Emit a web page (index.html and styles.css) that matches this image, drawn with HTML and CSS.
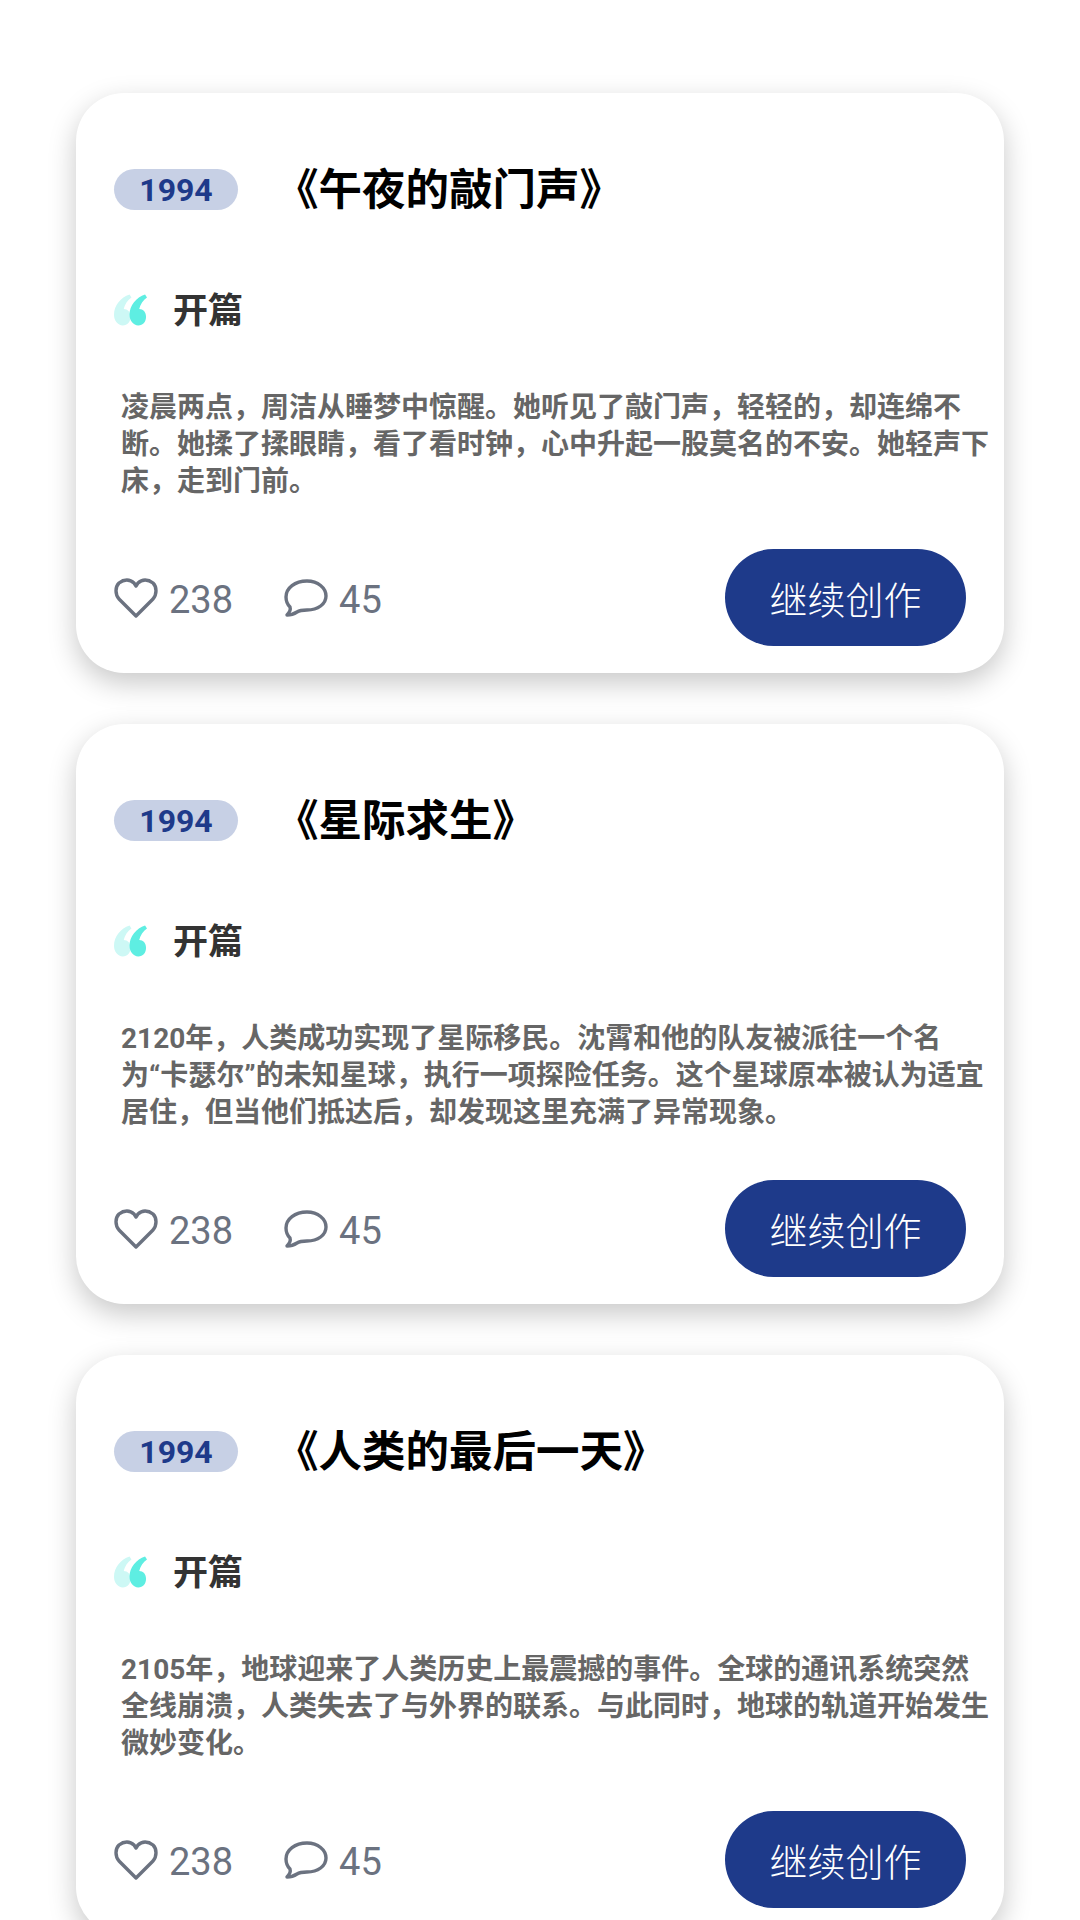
FILE: index.html
```html
<!DOCTYPE html>
<html lang="en">
<head>
  <meta charset="UTF-8">
  <meta name="viewport" content="width=device-width, initial-scale=1.0">
  <title>故事列表</title>
  <link rel="stylesheet" href="styles.css">
</head>
<body>
  <svg class="icon-defs" width="0" height="0" aria-hidden="true">
    <symbol id="icon-quote" viewBox="0 0 34 32">
      <path fill="#cdf8f5" d="M16 0 C7 3 0 11 0 21 C0 27 4 32 9 32 C14 32 17 28 17 23 C17 18 14 15 10 15 C11 10 14 6 18 3 Z"/>
      <path fill="#5eeee2" d="M32 0 C23 3 16 11 16 21 C16 27 20 32 25 32 C30 32 33 28 33 23 C33 18 30 15 26 15 C27 10 30 6 34 3 Z"/>
    </symbol>
    <symbol id="icon-heart" viewBox="0 0 44 40">
      <path fill="none" stroke="currentColor" stroke-width="3.4" stroke-linejoin="round" d="M22 38 L5 21 C1 16 1 9 5 5 C10 1 16 1 20 5 L22 8 L24 5 C28 1 34 1 39 5 C43 9 43 16 39 21 Z"/>
    </symbol>
    <symbol id="icon-comment" viewBox="0 0 44 38">
      <path fill="none" stroke="currentColor" stroke-width="3.4" stroke-linejoin="round" d="M3 36 C5 34 7 31 6 28 C3 25 2 22 2 18 C2 9 11 2 23 2 C34 2 42 9 42 17 C42 25 34 31 23 31 C19 31 16 31 13 33 C10 35 7 36 3 36 Z"/>
    </symbol>
  </svg>

  <div class="story-list">
    <div class="card">
      <div class="card-header">
        <span class="year">1994</span>
        <h2 class="title">《午夜的敲门声》</h2>
      </div>
      <div class="section-head">
        <svg class="quote"><use href="#icon-quote"/></svg>
        <span>开篇</span>
      </div>
      <p class="excerpt">凌晨两点，周洁从睡梦中惊醒。她听见了敲门声，轻轻的，却连绵不断。她揉了揉眼睛，看了看时钟，心中升起一股莫名的不安。她轻声下床，走到门前。</p>
      <div class="card-footer">
        <div class="stats">
          <span class="stat"><svg class="icon-like"><use href="#icon-heart"/></svg><span class="count">238</span></span>
          <span class="stat"><svg class="icon-comment"><use href="#icon-comment"/></svg><span class="count">45</span></span>
        </div>
        <button class="btn">继续创作</button>
      </div>
    </div>

    <div class="card">
      <div class="card-header">
        <span class="year">1994</span>
        <h2 class="title">《星际求生》</h2>
      </div>
      <div class="section-head">
        <svg class="quote"><use href="#icon-quote"/></svg>
        <span>开篇</span>
      </div>
      <p class="excerpt">2120年，人类成功实现了星际移民。沈霄和他的队友被派往一个名为“卡瑟尔”的未知星球，执行一项探险任务。这个星球原本被认为适宜居住，但当他们抵达后，却发现这里充满了异常现象。</p>
      <div class="card-footer">
        <div class="stats">
          <span class="stat"><svg class="icon-like"><use href="#icon-heart"/></svg><span class="count">238</span></span>
          <span class="stat"><svg class="icon-comment"><use href="#icon-comment"/></svg><span class="count">45</span></span>
        </div>
        <button class="btn">继续创作</button>
      </div>
    </div>

    <div class="card">
      <div class="card-header">
        <span class="year">1994</span>
        <h2 class="title">《人类的最后一天》</h2>
      </div>
      <div class="section-head">
        <svg class="quote"><use href="#icon-quote"/></svg>
        <span>开篇</span>
      </div>
      <p class="excerpt">2105年，地球迎来了人类历史上最震撼的事件。全球的通讯系统突然全线崩溃，人类失去了与外界的联系。与此同时，地球的轨道开始发生微妙变化。</p>
      <div class="card-footer">
        <div class="stats">
          <span class="stat"><svg class="icon-like"><use href="#icon-heart"/></svg><span class="count">238</span></span>
          <span class="stat"><svg class="icon-comment"><use href="#icon-comment"/></svg><span class="count">45</span></span>
        </div>
        <button class="btn">继续创作</button>
      </div>
    </div>
  </div>
</body>
</html>
```

FILE: styles.css
```css
:root {
  --primary: #1e3a8a;
  --badge-bg: #c7d0e5;
  --muted: #6b7280;
}

* {
  margin: 0;
  padding: 0;
  box-sizing: border-box;
  font-family: Roboto, "Noto Sans CJK SC", sans-serif;
}

html, body {
  height: 1920px;
  overflow: hidden;
  background-color: white;
}

.icon-defs {
  display: block;
}

.story-list {
  display: flex;
  flex-direction: column;
  gap: 51px;
  padding: 93px 76px 0;
}

.card {
  height: 580px;
  flex-shrink: 0;
  padding: 66px 38px 0;
  background-color: white;
  border-radius: 48px;
  box-shadow: 0 10px 28px rgba(0, 0, 0, 0.22);
}

.card-header {
  display: flex;
  align-items: center;
  gap: 37px;
  height: 60px;
}

.year {
  width: 124px;
  height: 41px;
  border-radius: 21px;
  background-color: var(--badge-bg);
  color: var(--primary);
  font-size: 32px;
  font-weight: 700;
  line-height: 43px;
  text-align: center;
}

.title {
  padding-top: 3px;
  font-size: 43.5px;
  font-weight: 700;
  line-height: 60px;
  color: black;
}

.section-head {
  display: flex;
  align-items: center;
  gap: 26px;
  margin-top: 71px;
  font-size: 35px;
  font-weight: 700;
  line-height: 44px;
  color: #333;
}

.quote {
  width: 33px;
  height: 34px;
  margin-bottom: 4px;
}

.excerpt {
  width: 880px;
  margin-top: 55px;
  padding-left: 7px;
  font-size: 28px;
  font-weight: 700;
  line-height: 37px;
  color: #666;
}

.card-footer {
  display: flex;
  align-items: center;
  justify-content: space-between;
  margin-top: 49px;
}

.stats {
  display: flex;
  align-items: center;
  gap: 51px;
}

.stat {
  display: flex;
  align-items: center;
  gap: 11px;
  font-size: 38px;
  color: var(--muted);
}

.count {
  margin-top: 4px;
}

.icon-like {
  width: 44px;
  height: 40px;
}

.icon-comment {
  width: 44px;
  height: 38px;
}

.btn {
  width: 241px;
  height: 97px;
  border: none;
  border-radius: 49px;
  background-color: var(--primary);
  color: white;
  font-size: 38px;
  font-weight: 300;
}
```
